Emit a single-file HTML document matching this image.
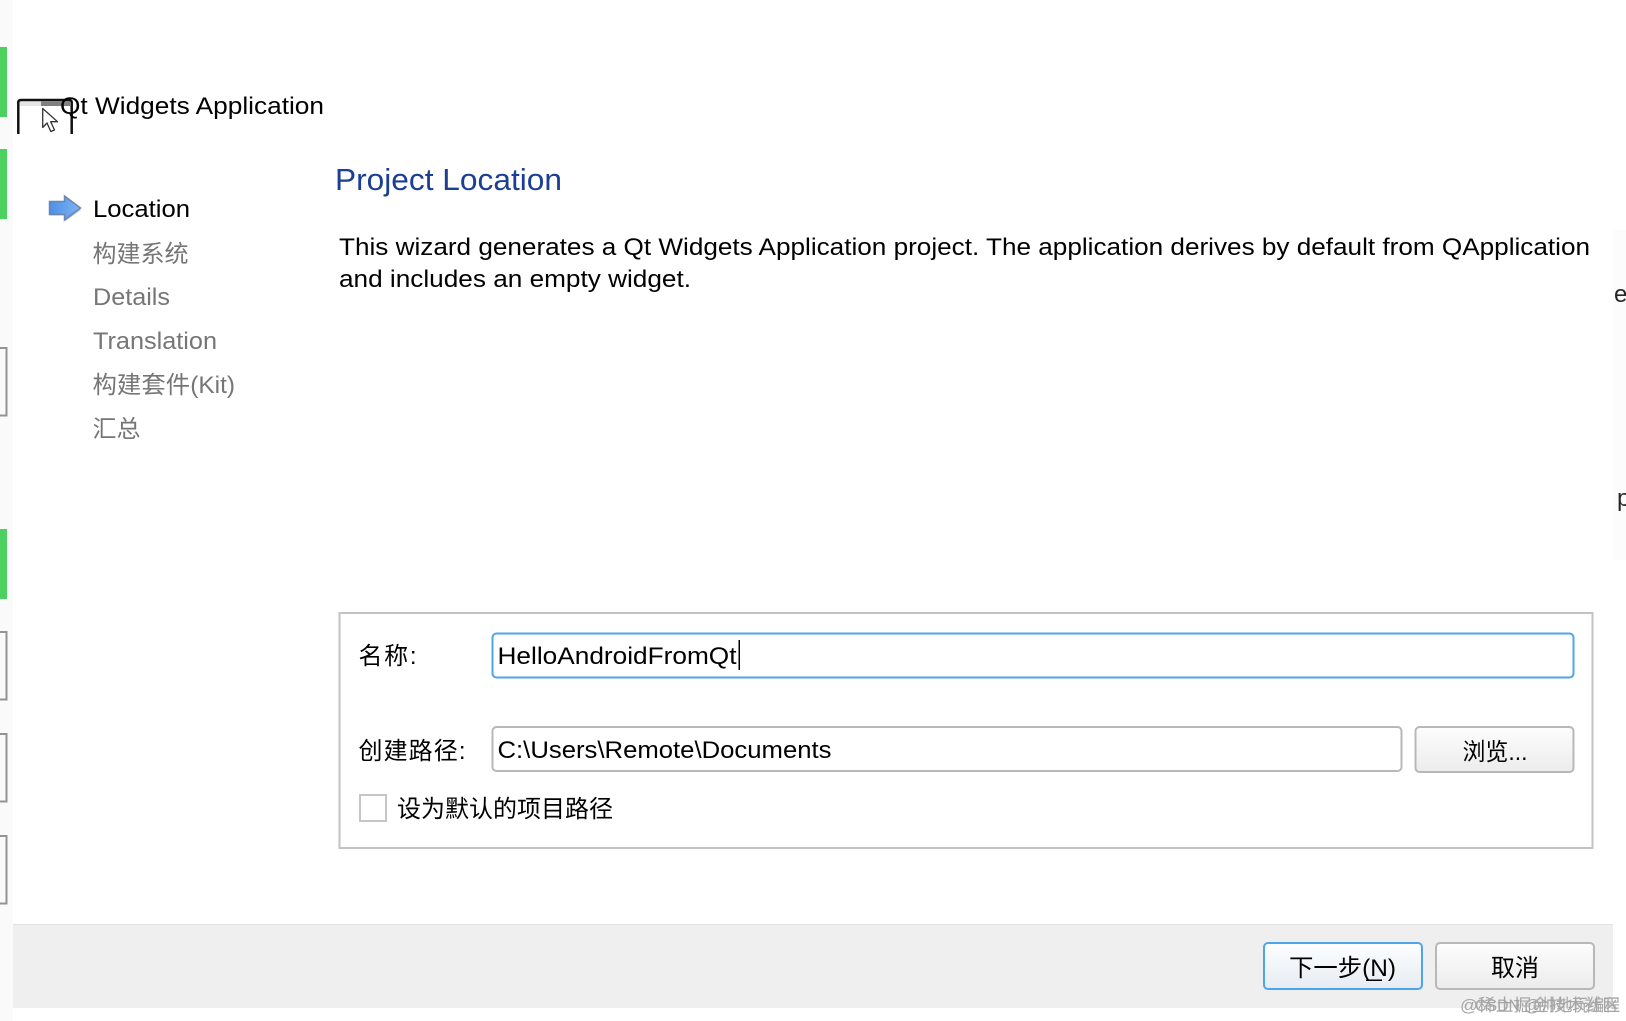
<!DOCTYPE html>
<html lang="zh"><head><meta charset="utf-8"><title>Qt Widgets Application</title>
<style>
html,body{margin:0;padding:0;background:#fff;width:1626px;height:1021px;overflow:hidden}
svg{display:block;position:absolute;left:0;top:0}
text{font-family:"Liberation Sans","Noto Sans CJK SC",sans-serif;font-size:24px;fill:#000}
.g{fill:#767676}
</style></head><body>
<svg width="1626" height="1021" viewBox="0 0 1626 1021" xmlns="http://www.w3.org/2000/svg">
<defs>
<linearGradient id="b" x1="0" y1="0" x2="0" y2="1"><stop offset="0" stop-color="#fdfdfd"/><stop offset="1" stop-color="#ececec"/></linearGradient>
<linearGradient id="n" x1="0" y1="0" x2="0" y2="1"><stop offset="0" stop-color="#fdfeff"/><stop offset="1" stop-color="#e6ecf3"/></linearGradient>
<linearGradient id="a" x1="0" y1="0" x2="1" y2="0"><stop offset="0" stop-color="#4f8fe6"/><stop offset="1" stop-color="#7db4f5"/></linearGradient>
<clipPath id="edge"><rect x="1614" y="270" width="12" height="250"/></clipPath>
</defs>
<rect x="0" y="0" width="13" height="1021" fill="#fafafa"/>
<rect x="1613" y="230" width="13" height="330" fill="#fcfcfc"/>
<rect y="47" width="7" height="70" fill="#4cd05f"/>
<rect y="149" width="7" height="70" fill="#4cd05f"/>
<rect y="529" width="7" height="70" fill="#4cd05f"/>
<path d="M0 348H6.500V415.500H0M0 632H6.500V699.500H0M0 734H6.500V801.500H0M0 836H6.500V903.500H0" fill="none" stroke="#949494" stroke-width="2"/>

<rect x="20" y="101.500" width="50" height="4.500" fill="#808080"/>
<rect x="20" y="101.500" width="21" height="4.500" fill="#e4e4e4"/>
<path d="M18.300 134V102.500Q18.300 100 21 100H69Q71.700 100 71.700 102.500V134" fill="none" stroke="#111" stroke-width="2.500"/>
<path d="M42.700 108.500V127.500L47 123L50.800 131.500L54.500 130L50.700 121.700H57.500Z" fill="#fff" stroke="#333" stroke-width="1.300" stroke-linejoin="round"/>
<text x="60" y="114" textLength="264" lengthAdjust="spacingAndGlyphs">Qt Widgets Application</text>

<path d="M50 203H65V197L81 208.500L65 220V214H50Z" fill="#8a98ad" opacity=".5" transform="translate(0 1.500)"/>
<path d="M49.500 201.500H64.500V196L80.500 208L64.500 220V214.500H49.500Z" fill="url(#a)" stroke="#6c86ad" stroke-width="1.500"/>

<text x="93" y="217" textLength="97" lengthAdjust="spacingAndGlyphs">Location</text>
<text class="g" x="92.500" y="262" textLength="96" lengthAdjust="spacingAndGlyphs">构建系统</text>
<text class="g" x="93" y="305" textLength="77" lengthAdjust="spacingAndGlyphs">Details</text>
<text class="g" x="93" y="349" textLength="124" lengthAdjust="spacingAndGlyphs">Translation</text>
<text class="g" x="92.500" y="393" textLength="142.500" lengthAdjust="spacingAndGlyphs">构建套件(Kit)</text>
<text class="g" x="92.500" y="437" textLength="48" lengthAdjust="spacingAndGlyphs">汇总</text>

<text x="335" y="190" style="font-size:31px;fill:#1c3f94" textLength="227" lengthAdjust="spacingAndGlyphs">Project Location</text>
<text x="339" y="255" textLength="1251" lengthAdjust="spacingAndGlyphs">This wizard generates a Qt Widgets Application project. The application derives by default from QApplication</text>
<text x="339" y="287" textLength="352" lengthAdjust="spacingAndGlyphs">and includes an empty widget.</text>

<g clip-path="url(#edge)" opacity=".85">
<text x="1602" y="302">ke</text>
<text x="1617" y="506">p</text>
</g>

<rect x="339.500" y="613" width="1253" height="235" fill="#fff" stroke="#c2c2c2" stroke-width="2"/>

<text x="358.500" y="664" textLength="58" lengthAdjust="spacing">名称:</text>
<rect x="492.500" y="633.500" width="1081" height="44" rx="4" fill="#fff" stroke="#4ea6ea" stroke-width="2"/>
<text x="497.500" y="664" textLength="239" lengthAdjust="spacingAndGlyphs">HelloAndroidFromQt</text>
<rect x="738.500" y="640" width="1.500" height="30" fill="#000"/>

<text x="358.500" y="759" textLength="107" lengthAdjust="spacing">创建路径:</text>
<rect x="492.500" y="727" width="909" height="44" rx="4" fill="#fff" stroke="#b8b8b8" stroke-width="2"/>
<text x="497.500" y="758" textLength="334" lengthAdjust="spacingAndGlyphs">C:\Users\Remote\Documents</text>
<rect x="1415.500" y="727" width="158" height="45" rx="4" fill="url(#b)" stroke="#b8b8b8" stroke-width="2"/>
<text x="1462.500" y="760" textLength="65" lengthAdjust="spacingAndGlyphs">浏览...</text>

<rect x="360" y="795" width="26" height="26" fill="#fff" stroke="#c6c6c6" stroke-width="2"/>
<text x="397" y="817" textLength="216" lengthAdjust="spacingAndGlyphs">设为默认的项目路径</text>

<rect x="13" y="924" width="1600" height="84" fill="#efefef"/>
<rect x="13" y="924" width="1600" height="1" fill="#e2e2e2"/>
<rect x="1264" y="943" width="158" height="46" rx="4" fill="url(#n)" stroke="#4ea6ea" stroke-width="2"/>
<text x="1289" y="976" textLength="107" lengthAdjust="spacingAndGlyphs">下一步(N)</text>
<rect x="1366" y="979.500" width="16" height="1.500" fill="#000"/>
<rect x="1436" y="943" width="158" height="46" rx="4" fill="url(#b)" stroke="#b8b8b8" stroke-width="2"/>
<text x="1491" y="976" textLength="48" lengthAdjust="spacingAndGlyphs">取消</text>

<text x="1460" y="1011" style="font-size:17px;fill:#a5a5a5" textLength="160" lengthAdjust="spacingAndGlyphs">@稀土掘金技术社区</text>
<text x="1475" y="1011" style="font-size:17px;fill:#a5a5a5" textLength="145" lengthAdjust="spacingAndGlyphs">CSDN @帅地玩编程</text>
</svg>
</body></html>
